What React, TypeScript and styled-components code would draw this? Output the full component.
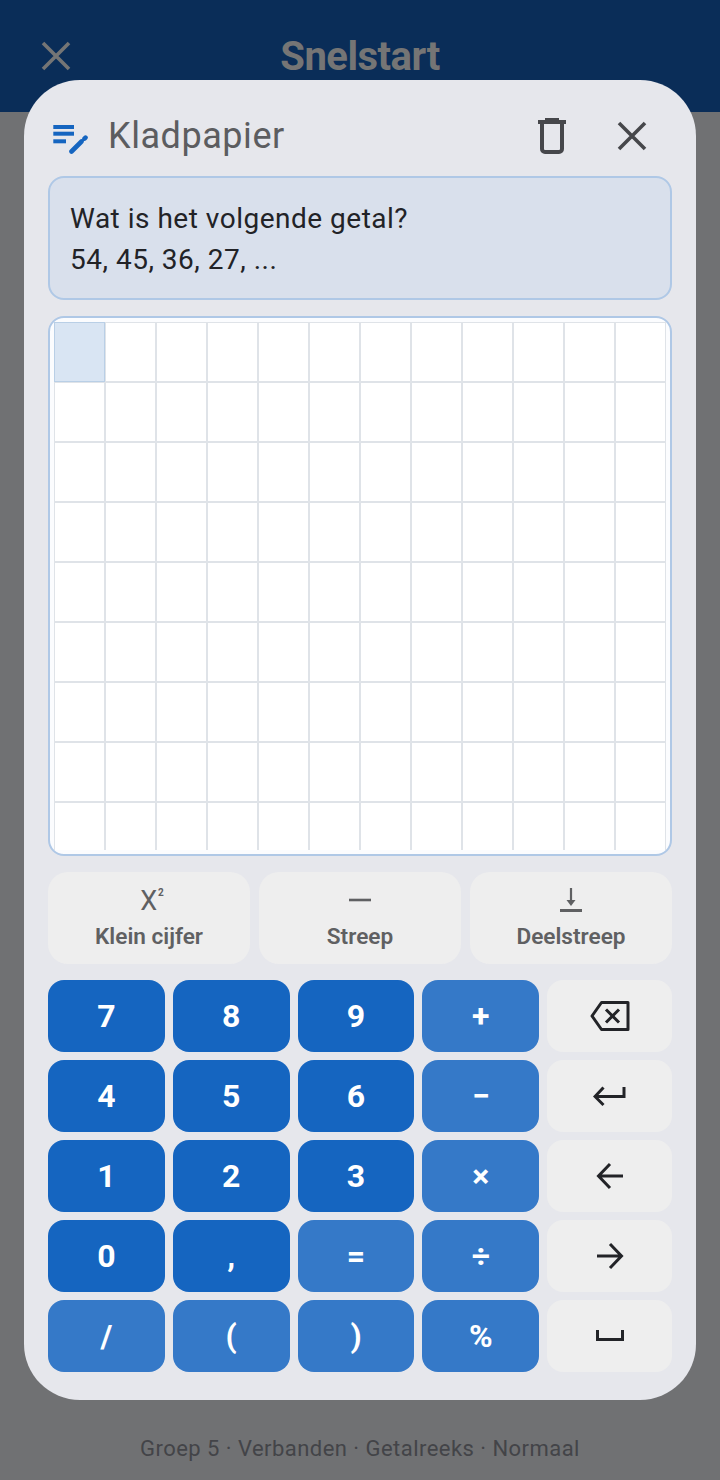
import styled, { createGlobalStyle } from "styled-components";

const GlobalStyle = createGlobalStyle`
  html, body {
    margin: 0;
    padding: 0;
    background: #707173;
    font-family: "Roboto", "Liberation Sans", sans-serif;
  }
  * {
    box-sizing: border-box;
  }
`;

const Page = styled.div`
  position: relative;
  width: 720px;
  height: 1480px;
  overflow: hidden;
  display: flex;
  flex-direction: column;
  background: #707173;
`;

const AppBar = styled.header`
  height: 112px;
  background: #0a2d58;
  display: flex;
  align-items: flex-start;
  padding: 36px 0 0 36px;
  color: #757575;
`;

const AppBarTitle = styled.h1`
  margin: 0;
  flex: 1;
  padding-right: 76px;
  margin-top: -3px;
  text-align: center;
  font-size: 40px;
  line-height: 48px;
  font-weight: 700;
  letter-spacing: -0.5px;
`;

const Footer = styled.footer`
  margin-top: auto;
  padding-bottom: 16px;
  text-align: center;
  font-size: 22px;
  line-height: 30px;
  letter-spacing: 0.46px;
  color: #434448;
`;

const Sheet = styled.section`
  position: absolute;
  top: 80px;
  left: 24px;
  width: 672px;
  height: 1320px;
  padding: 0 24px;
  border-radius: 56px;
  background: #e6e7ec;
  display: flex;
  flex-direction: column;
`;

const SheetHeader = styled.div`
  height: 96px;
  padding: 16px 20px 0 0;
  display: flex;
  align-items: center;
`;

const SheetTitle = styled.h2`
  margin: 0 0 0 20px;
  flex: 1;
  font-size: 36px;
  line-height: 44px;
  font-weight: 400;
  letter-spacing: 0.55px;
  color: #5c5d60;
`;

const HeaderAction = styled.button`
  width: 40px;
  height: 40px;
  padding: 0;
  margin-left: 40px;
  border: 0;
  background: none;
  display: flex;
  align-items: center;
  justify-content: center;
`;

const QuestionBox = styled.div`
  height: 124px;
  padding: 20px 20px 0;
  border: 2px solid #afc8e6;
  border-radius: 16px;
  background: #d9e0ec;
  font-size: 28px;
  line-height: 41px;
  letter-spacing: 0.5px;
  color: #222327;
`;

const PaperBox = styled.div`
  height: 540px;
  margin-top: 16px;
  padding: 4px;
  border: 2px solid #afc8e6;
  border-radius: 16px;
  background: #fbfcfe;
`;

const PaperGrid = styled.div`
  height: 100%;
  overflow: hidden;
  display: grid;
  grid-template-columns: repeat(12, 51px);
  grid-auto-rows: 60px;
  background: #fff;
`;

const PaperCell = styled.div<{ $active?: boolean }>`
  border: 1px solid ${(props) => (props.$active ? "#b9cfe6" : "#dfe3e8")};
  background: ${(props) => (props.$active ? "#d9e5f3" : "#fff")};
`;

const ToolRow = styled.div`
  height: 92px;
  margin-top: 16px;
  display: grid;
  grid-template-columns: repeat(3, 1fr);
  gap: 9px;
`;

const ToolButton = styled.button`
  padding: 0;
  border: 0;
  border-radius: 20px;
  background: #eeeeee;
  color: #5f6062;
  font-family: inherit;
  display: flex;
  flex-direction: column;
  align-items: center;
`;

const ToolIcon = styled.span`
  height: 44px;
  display: flex;
  align-items: flex-end;
  justify-content: center;
`;

const SquaredX = styled.span`
  font-size: 27px;
  line-height: 30px;
  font-weight: 400;
  margin-left: 6px;
`;

const SmallTwo = styled.sup`
  font-size: 10px;
  line-height: 9px;
  font-weight: 700;
  vertical-align: 14px;
  margin-left: 1px;
`;

const ToolLabel = styled.span`
  margin-top: 6px;
  font-size: 22.6px;
  line-height: 30px;
  font-weight: 600;
`;

const KeyGrid = styled.div`
  margin-top: 16px;
  display: grid;
  grid-template-columns: repeat(4, 116.8px) 1fr;
  grid-auto-rows: 72px;
  gap: 8px;
`;

const keyColors = {
  digit: "#1565c0",
  operator: "#3579c8",
  control: "#eeeeee",
};

const Key = styled.button<{ $kind: keyof typeof keyColors }>`
  padding: 0;
  border: 0;
  border-radius: 16px;
  background: ${(props) => keyColors[props.$kind]};
  color: #fff;
  font-family: inherit;
  font-size: 32px;
  font-weight: 700;
  line-height: 72px;
  display: flex;
  align-items: center;
  justify-content: center;
`;

const CloseIcon = ({ color }: { color: string }) => (
  <svg width="40" height="40" viewBox="0 0 40 40" fill="none">
    <path d="M7 7l26 26M33 7L7 33" stroke={color} strokeWidth="3.6" />
  </svg>
);

const EditNoteIcon = () => (
  <svg width="40" height="40" viewBox="0 0 40 40" fill="#1565c0">
    <rect x="5.300" y="9" width="20.7" height="4" />
    <rect x="5.300" y="15.7" width="20.7" height="4" />
    <rect x="5.300" y="23.3" width="12.7" height="4" />
    <path
      d="M23.500 35.500L33.500 25.500M36.500 22.600l1-1"
      stroke="#1565c0"
      strokeWidth="4.6"
      strokeLinecap="round"
      fill="none"
    />
  </svg>
);

const TrashIcon = () => (
  <svg width="40" height="40" viewBox="0 0 40 40" fill="none">
    <path d="M6 4h28v4H6zM13 2h14v2H13z" fill="#46474b" />
    <path
      d="M10 8v25a3 3 0 0 0 3 3h14a3 3 0 0 0 3-3V8"
      stroke="#46474b"
      strokeWidth="4"
    />
  </svg>
);

const StreepIcon = () => (
  <svg width="26" height="26" viewBox="0 0 26 26" fill="none">
    <path d="M2 10h22" stroke="#5f6062" strokeWidth="2.6" />
  </svg>
);

const DeelstreepIcon = () => (
  <svg width="26" height="30" viewBox="0 0 26 30" fill="none">
    <path d="M13 2v14" stroke="#5f6062" strokeWidth="2.2" />
    <path d="M8.500 14h9L13 20z" fill="#5f6062" />
    <path d="M2 24.500h22" stroke="#5f6062" strokeWidth="3" />
  </svg>
);

const BackspaceIcon = () => (
  <svg width="40" height="32" viewBox="0 0 40 32" fill="none">
    <path
      d="M11.500 2.500H38v27H11.500L2 16z"
      stroke="#222327"
      strokeWidth="3"
      strokeLinejoin="round"
    />
    <path d="M16 9.500l13 13M29 9.500l-13 13" stroke="#222327" strokeWidth="3" />
  </svg>
);

const EnterIcon = () => (
  <svg width="34" height="22" viewBox="0 0 34 22" fill="none">
    <path
      d="M31 2v9.500H3M10.500 2.500L2 11.500l8.500 8.500"
      stroke="#222327"
      strokeWidth="3"
    />
  </svg>
);

const LeftIcon = () => (
  <svg width="28" height="28" viewBox="0 0 28 28" fill="none">
    <path d="M27 14H3M14 2L2.500 14 14 26" stroke="#222327" strokeWidth="3" />
  </svg>
);

const RightIcon = () => (
  <svg width="28" height="28" viewBox="0 0 28 28" fill="none">
    <path d="M1 14h24M14 2l11.500 12L14 26" stroke="#222327" strokeWidth="3" />
  </svg>
);

const SpaceIcon = () => (
  <svg width="28" height="12" viewBox="0 0 28 12" fill="none">
    <path d="M1.500 0v9.500h25V0" stroke="#222327" strokeWidth="3" />
  </svg>
);

type KeyDef = {
  kind: keyof typeof keyColors;
  label: React.ReactNode;
};

const digit = (label: string): KeyDef => ({ kind: "digit", label });
const op = (label: string): KeyDef => ({ kind: "operator", label });
const control = (label: React.ReactNode): KeyDef => ({ kind: "control", label });

const keys: KeyDef[] = [
  digit("7"),
  digit("8"),
  digit("9"),
  op("+"),
  control(<BackspaceIcon />),
  digit("4"),
  digit("5"),
  digit("6"),
  op("−"),
  control(<EnterIcon />),
  digit("1"),
  digit("2"),
  digit("3"),
  op("×"),
  control(<LeftIcon />),
  digit("0"),
  digit(","),
  op("="),
  op("÷"),
  control(<RightIcon />),
  op("/"),
  op("("),
  op(")"),
  op("%"),
  control(<SpaceIcon />),
];

const cells = Array.from({ length: 108 }, (_, i) => i);

export default function App() {
  return (
    <>
      <GlobalStyle />
      <Page>
        <AppBar>
          <CloseIcon color="#757575" />
          <AppBarTitle>Snelstart</AppBarTitle>
        </AppBar>
        <Footer>Groep 5 · Verbanden · Getalreeks · Normaal</Footer>

        <Sheet>
          <SheetHeader>
            <EditNoteIcon />
            <SheetTitle>Kladpapier</SheetTitle>
            <HeaderAction aria-label="Wissen">
              <TrashIcon />
            </HeaderAction>
            <HeaderAction aria-label="Sluiten">
              <CloseIcon color="#46474b" />
            </HeaderAction>
          </SheetHeader>

          <QuestionBox>
            Wat is het volgende getal?
            <br />
            54, 45, 36, 27, ...
          </QuestionBox>

          <PaperBox>
            <PaperGrid>
              {cells.map((i) => (
                <PaperCell key={i} $active={i === 0} />
              ))}
            </PaperGrid>
          </PaperBox>

          <ToolRow>
            <ToolButton>
              <ToolIcon>
                <SquaredX>
                  X<SmallTwo>2</SmallTwo>
                </SquaredX>
              </ToolIcon>
              <ToolLabel>Klein cijfer</ToolLabel>
            </ToolButton>
            <ToolButton>
              <ToolIcon>
                <StreepIcon />
              </ToolIcon>
              <ToolLabel>Streep</ToolLabel>
            </ToolButton>
            <ToolButton>
              <ToolIcon>
                <DeelstreepIcon />
              </ToolIcon>
              <ToolLabel>Deelstreep</ToolLabel>
            </ToolButton>
          </ToolRow>

          <KeyGrid>
            {keys.map((key, i) => (
              <Key key={i} $kind={key.kind}>
                {key.label}
              </Key>
            ))}
          </KeyGrid>
        </Sheet>
      </Page>
    </>
  );
}
